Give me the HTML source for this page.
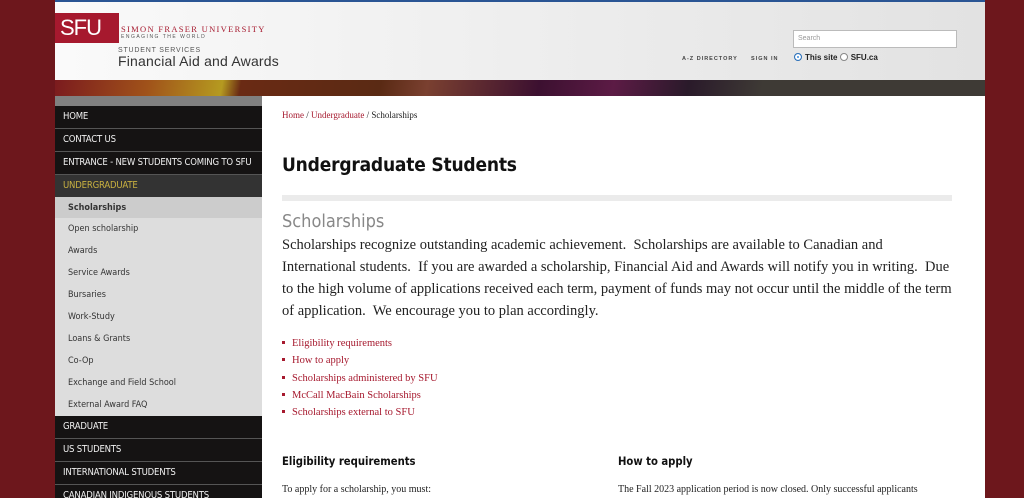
<!DOCTYPE html>
<html><head><style>
*{margin:0;padding:0;box-sizing:border-box}
html,body{width:1024px;height:498px;overflow:hidden}
body{background:#6d171c;font-family:"Liberation Sans",sans-serif;position:relative}
#wrap{position:absolute;left:55px;top:0;width:930px;height:498px;background:#fff;overflow:hidden}
#hdr{position:absolute;left:0;top:0;width:930px;height:80px;background:linear-gradient(90deg,#fafafa,#e2e2e2);border-top:2px solid #2a5594}
#logo{position:absolute;left:0;top:11px;width:64px;height:30px;background:#a6192e;color:#fff;font-size:22px;line-height:30px;padding-left:5px;letter-spacing:-1px}
#uni{position:absolute;left:66px;top:23px;line-height:1;font-family:"Liberation Serif",serif;color:#a6192e;font-size:8.5px;letter-spacing:1.3px}
#eng{position:absolute;left:66px;top:33px;line-height:1;font-size:5px;letter-spacing:1.5px;color:#555}
#ss{position:absolute;left:63px;top:45px;line-height:1;font-size:7px;letter-spacing:.8px;color:#555}
#faa{position:absolute;left:63px;top:52px;line-height:1.1;font-size:14px;letter-spacing:.2px;color:#333}
#search{position:absolute;left:738px;top:28px;width:164px;height:18px;background:#fff;border:1px solid #bbb;font-size:7px;color:#999;padding:4px 4px}
.tl{position:absolute;top:54px;font-size:5.5px;font-weight:bold;letter-spacing:1px;color:#444}
.rd{position:absolute;top:51px;font-size:8px;font-weight:bold;color:#222}
.rad{display:inline-block;width:8px;height:8px;border-radius:50%;border:1px solid #888;background:#fff;vertical-align:-1px;margin-right:3px}
#ban{position:absolute;left:0;top:80px;width:930px;height:16px;background:linear-gradient(100deg,#7b1b1e 0%,#a0521a 10%,#b59a20 18%,#6a2a14 20%,#5a2a14 35%,#7a4030 40%,#3c1030 52%,#5c1b45 60%,#2a1a2a 68%,#3e3a35 76%,#3e3a35 100%)}
#side{position:absolute;left:0;top:96px;width:207px;height:402px;background:#ddd;overflow:hidden}
#gs{height:10px;background:#808080}
.m{height:23px;background:#151313;color:#f0f0f0;font-size:9.5px;line-height:21px;padding-left:8px;border-bottom:1px solid #555;font-family:"DejaVu Sans Condensed","Liberation Sans",sans-serif;letter-spacing:-.2px}
.m.u{height:22px;background:#333;color:#c8b040;border-bottom:0}
.s{height:22px;font-size:9px;line-height:22px;padding-left:13px;color:#333;font-family:"DejaVu Sans Condensed","Liberation Sans",sans-serif}
.s.a{height:21px;background:#ccc;font-weight:bold}
#main{position:absolute;left:227px;top:96px;width:670px}
.bc{position:absolute;top:14px;font-family:"Liberation Serif",serif;font-size:9px;color:#222}
.bc a{color:#a6192e;text-decoration:none}
h1{position:absolute;top:58px;font-size:19px;font-weight:bold;color:#111;font-family:"DejaVu Sans Condensed","Liberation Sans",sans-serif;letter-spacing:-.2px}
#rule{position:absolute;top:99px;width:670px;height:6px;background:#ebebeb}
h2{position:absolute;top:115px;font-size:18px;font-weight:normal;color:#888;font-family:"DejaVu Sans Condensed","Liberation Sans",sans-serif}
#p{position:absolute;top:138px;width:672px;font-family:"Liberation Serif",serif;font-size:14.5px;line-height:22px;color:#222}
ul{position:absolute;top:239px;list-style:none;font-family:"Liberation Serif",serif;font-size:10.5px;line-height:17.3px;color:#a6192e}
ul li:before{content:"";display:inline-block;width:3px;height:3px;background:#a6192e;margin-right:7px;vertical-align:2px}
h3{position:absolute;top:359px;font-size:11.2px;font-weight:bold;color:#111;font-family:"DejaVu Sans Condensed","Liberation Sans",sans-serif}
.t{position:absolute;top:388px;font-family:"Liberation Serif",serif;font-size:10px;color:#222}
</style></head><body>
<div id="wrap">
<div id="hdr">
<div id="logo">SFU</div>
<div id="uni">SIMON FRASER UNIVERSITY</div>
<div id="eng">ENGAGING THE WORLD</div>
<div id="ss">STUDENT SERVICES</div>
<div id="faa">Financial Aid and Awards</div>
<div id="search">Search</div>
<div class="tl" style="left:627px">A-Z DIRECTORY</div>
<div class="tl" style="left:696px">SIGN IN</div>
<div class="rd" style="left:739px"><span class="rad" style="background:#3b8de0;border-color:#2a6fb8;box-shadow:inset 0 0 0 2px #fff"></span>This site <span class="rad"></span>SFU.ca</div>
</div>
<div id="ban"></div>
<div id="side">
<div id="gs"></div>
<div class="m">HOME</div>
<div class="m">CONTACT US</div>
<div class="m">ENTRANCE - NEW STUDENTS COMING TO SFU</div>
<div class="m u">UNDERGRADUATE</div>
<div class="s a">Scholarships</div>
<div class="s">Open scholarship</div>
<div class="s">Awards</div>
<div class="s">Service Awards</div>
<div class="s">Bursaries</div>
<div class="s">Work-Study</div>
<div class="s">Loans &amp; Grants</div>
<div class="s">Co-Op</div>
<div class="s">Exchange and Field School</div>
<div class="s">External Award FAQ</div>
<div class="m">GRADUATE</div>
<div class="m">US STUDENTS</div>
<div class="m">INTERNATIONAL STUDENTS</div>
<div class="m">CANADIAN INDIGENOUS STUDENTS</div>
</div>
<div id="main">
<div class="bc"><a>Home</a> / <a>Undergraduate</a> / Scholarships</div>
<h1>Undergraduate Students</h1>
<div id="rule"></div>
<h2>Scholarships</h2>
<div id="p">Scholarships recognize outstanding academic achievement.&nbsp; Scholarships are available to Canadian and International students.&nbsp; If you are awarded a scholarship, Financial Aid and Awards will notify you in writing.&nbsp; Due to the high volume of applications received each term, payment of funds may not occur until the middle of the term of application.&nbsp; We encourage you to plan accordingly.</div>
<ul><li>Eligibility requirements</li><li>How to apply</li><li>Scholarships administered by SFU</li><li>McCall MacBain Scholarships</li><li>Scholarships external to SFU</li></ul>
<h3>Eligibility requirements</h3>
<h3 style="left:336px">How to apply</h3>
<div class="t">To apply for a scholarship, you must:</div>
<div class="t" style="left:336px">The Fall 2023 application period is now closed. Only successful applicants</div>
</div>
</div>
</body></html>
